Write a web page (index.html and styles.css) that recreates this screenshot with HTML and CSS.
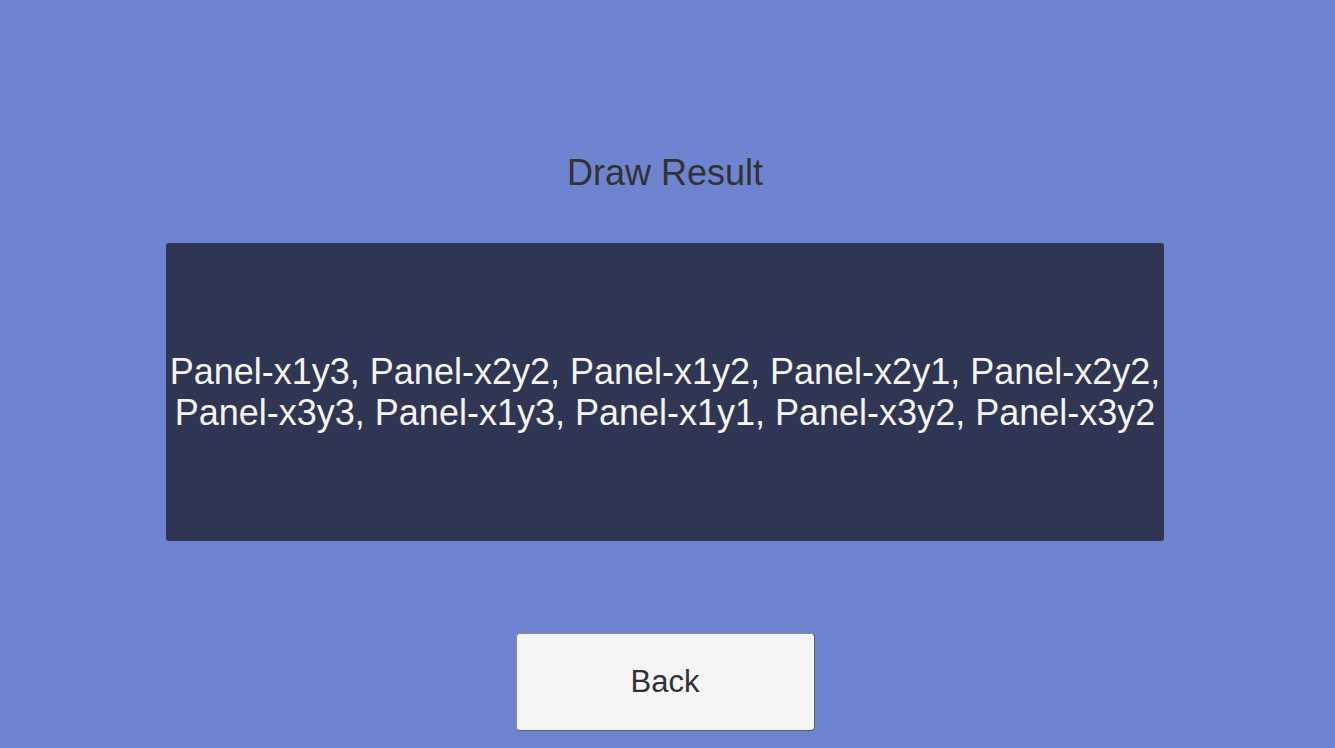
FILE: index.html
```html
<!DOCTYPE html>
<html>
<head>
<meta charset="utf-8">
<link rel="stylesheet" href="styles.css">
</head>
<body>
<div class="screen">
  <h1 class="title">Draw Result</h1>
  <div class="result-panel">
    <p class="result-text">Panel-x1y3, Panel-x2y2, Panel-x1y2, Panel-x2y1, Panel-x2y2,<br>Panel-x3y3, Panel-x1y3, Panel-x1y1, Panel-x3y2, Panel-x3y2</p>
  </div>
  <button class="back-button">Back</button>
</div>
</body>
</html>
```
FILE: styles.css
```css
html, body {
  margin: 0;
  padding: 0;
  height: 100%;
  overflow: hidden;
}
body {
  background: #6e84d0;
  font-family: "Liberation Sans", Arial, sans-serif;
}
.screen {
  display: flex;
  flex-direction: column;
  align-items: center;
  padding-top: 152px;
  padding-right: 5px;
}
.title {
  margin: 0;
  font-size: 36px;
  line-height: 42px;
  font-weight: normal;
  color: #323232;
}
.result-panel {
  margin-top: 49px;
  width: 998px;
  height: 298px;
  box-sizing: border-box;
  background: #2f3653;
  border-radius: 3px;
  display: flex;
  align-items: center;
  justify-content: center;
}
.result-text {
  margin: 0;
  text-align: center;
  font-size: 36px;
  line-height: 41px;
  color: #f4f4f4;
}
.back-button {
  margin-top: 92px;
  width: 299px;
  height: 98px;
  box-sizing: border-box;
  background: #f5f5f5;
  border: 1px solid #8d8d95;
  border-right-color: #5a5a64;
  border-bottom-color: #5a5a64;
  border-radius: 4px;
  font-family: "Liberation Sans", Arial, sans-serif;
  font-size: 31px;
  color: #323232;
  padding: 0;
}
```
